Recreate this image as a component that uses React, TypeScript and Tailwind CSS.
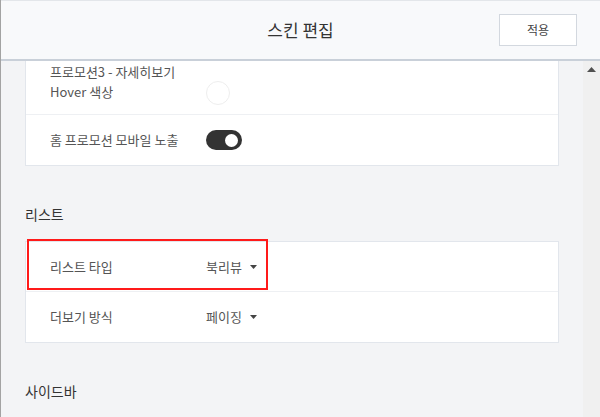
import React from "react";

const font = { fontFamily: '"Noto Sans CJK KR", "Noto Sans", sans-serif' };

const Caret = () => (
  <svg width="7" height="4" viewBox="0 0 7 4" className="ml-[8px]">
    <path d="M0 0 L7 0 L3.5 4 Z" fill="#444" />
  </svg>
);

const Row = ({
  label,
  children,
  last,
}: {
  label: React.ReactNode;
  children: React.ReactNode;
  last?: boolean;
}) => (
  <div
    className={`flex h-[50px] items-center pl-[24px] ${
      last ? "" : "border-b border-[#eef0f3]"
    }`}
  >
    <div className="w-[156px] text-[13px] text-[#555]">{label}</div>
    <div className="flex items-center text-[13px] text-[#555]">{children}</div>
  </div>
);

const Heading = ({ children }: { children: React.ReactNode }) => (
  <h3 className="mb-[17px] mt-[38px] text-[14px] leading-[20px] text-[#333]">
    {children}
  </h3>
);

export default function App() {
  return (
    <div
      className="flex h-[417px] w-[600px] flex-col overflow-hidden border-l border-[#a3a3a3] bg-[#f3f4f6]"
      style={font}
    >
      {/* Header */}
      <div className="relative flex h-[61px] shrink-0 items-center justify-center border-b-2 border-t border-b-[#c9d0d9] border-t-[#e3e6ea] bg-[#f8f9fb]">
        <h2 className="text-[17px] text-[#333]">스킨 편집</h2>
        <button className="absolute right-[23px] top-[13px] h-[32px] w-[78px] border border-[#d3d8df] bg-white text-[12px] text-[#444]">
          적용
        </button>
      </div>

      <div className="flex min-h-0 flex-1">
        <div className="min-w-0 flex-1 pl-[24px] pr-[24px]">
          {/* Card 1 (scrolled) */}
          <div className="border border-t-0 border-[#e2e6ec] bg-white">
            <div className="flex h-[54px] border-b border-[#eef0f3] pl-[24px]">
              <div className="w-[156px] pt-[1px] text-[13px] leading-[20px] text-[#555]">
                <div>프로모션3 - 자세히보기</div>
                <div>Hover 색상</div>
              </div>
              <div className="mt-[20px] h-[24px] w-[24px] rounded-full border border-[#eeeeee] bg-white" />
            </div>
            <Row label="홈 프로모션 모바일 노출" last>
              <div className="flex h-[20px] w-[36px] items-center justify-end rounded-full bg-[#333] pr-[4px]">
                <div className="h-[13px] w-[13px] rounded-full bg-white" />
              </div>
            </Row>
          </div>

          <Heading>리스트</Heading>
          <div className="relative border border-[#e2e6ec] bg-white">
            <div className="pointer-events-none absolute left-[1px] top-[-3px] z-10 h-[51px] w-[241px] border-2 border-[#ff1a1a]" />
            <Row label="리스트 타입">
              북리뷰
              <Caret />
            </Row>
            <Row label="더보기 방식" last>
              페이징
              <Caret />
            </Row>
          </div>

          <Heading>사이드바</Heading>
          <div className="h-[60px] border border-[#e2e6ec] bg-white" />
        </div>

        {/* Scrollbar */}
        <div className="flex w-[17px] shrink-0 justify-center bg-[#f0f0f0] pt-[6px]">
          <svg width="9" height="5" viewBox="0 0 9 5">
            <path d="M4.5 0 L9 5 L0 5 Z" fill="#505050" />
          </svg>
        </div>
      </div>
    </div>
  );
}
